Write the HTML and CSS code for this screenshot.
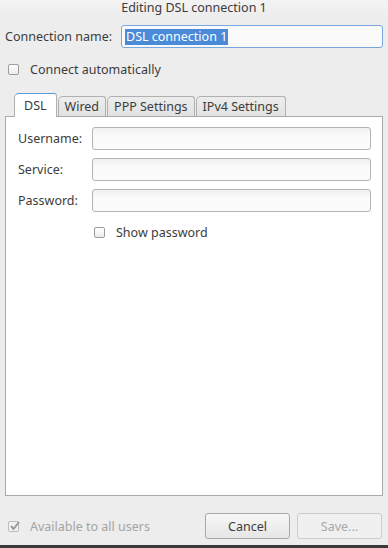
FILE: index.html
```html
<!DOCTYPE html>
<html lang="en">
<head>
    <meta charset="UTF-8">
    <title>Editing DSL connection 1</title>
    <link rel="stylesheet" href="styles.css">
</head>
<body>
    <div class="dialog">
        <div class="titlebar">Editing DSL connection 1</div>

        <div class="name-row">
            <label class="name-label">Connection name:</label>
            <div class="entry focused"><span class="selected">DSL connection 1</span></div>
        </div>

        <div class="check-row auto">
            <span class="check"></span>
            <span>Connect automatically</span>
        </div>

        <div class="tabs">
            <div class="tab active">DSL</div>
            <div class="tab">Wired</div>
            <div class="tab">PPP Settings</div>
            <div class="tab">IPv4 Settings</div>
        </div>

        <div class="panel">
            <div class="form">
                <label>Username:</label>
                <div class="entry"></div>
                <label>Service:</label>
                <div class="entry"></div>
                <label>Password:</label>
                <div class="entry"></div>
                <span></span>
                <div class="check-row">
                    <span class="check"></span>
                    <span>Show password</span>
                </div>
            </div>
        </div>

        <div class="footer">
            <div class="check-row disabled">
                <span class="check checked">
                    <svg width="11" height="10" viewBox="0 0 11 10"><path d="M2 5 L4.5 8 L10 1" fill="none" stroke="#9a9a9a" stroke-width="2"/></svg>
                </span>
                <span>Available to all users</span>
            </div>
            <div class="buttons">
                <button class="btn">Cancel</button>
                <button class="btn" disabled>Save...</button>
            </div>
        </div>
        <div class="frame-edge"></div>
    </div>
</body>
</html>
```

FILE: styles.css
```css
body {
    margin: 0;
    background: #ededed;
    font-family: "Noto Sans", "DejaVu Sans", sans-serif;
    font-size: 12.5px;
    color: #3c3c3c;
}
.dialog {
    height: 548px;
    display: flex;
    flex-direction: column;
    background: #ededed;
}
.titlebar {
    height: 17px;
    line-height: 15px;
    text-align: center;
    color: #3c3c3c;
    background: linear-gradient(#f4f4f4, #ececec);
}
.name-row {
    display: flex;
    align-items: center;
    margin-top: 8px;
    padding: 0 5px;
}
.name-label {
    width: 116px;
}
.entry {
    flex: 1;
    height: 21px;
    border: 1px solid #b4b4b4;
    border-radius: 3px;
    background: linear-gradient(#f0f0f0, #fbfbfb 40%, #fbfbfb);
    display: flex;
    align-items: center;
    padding: 0 3px;
}
.entry.focused {
    border-color: #7aa6df;
    background: #fafafa;
}
.selected {
    background: #4a8ad8;
    color: #fff;
    line-height: 16px;
    padding: 0 1px;
}
.check-row {
    display: flex;
    align-items: center;
    gap: 11px;
}
.check-row.auto {
    margin: 13px 0 0 8px;
}
.check {
    width: 9px;
    height: 9px;
    border: 1px solid #9c9c9c;
    border-radius: 2px;
    background: linear-gradient(#fff, #ececec);
    position: relative;
}
.check svg {
    position: absolute;
    left: 0;
    top: -1px;
}
.tabs {
    display: flex;
    align-items: flex-end;
    margin: 14px 0 0 14px;
    height: 24px;
}
.tab {
    height: 19px;
    line-height: 19px;
    padding: 0 6px 0 6px;
    border: 1px solid #b0b0b0;
    border-bottom: none;
    border-radius: 5px 3px 0 0;
    background: linear-gradient(#ededed, #e2e2e2);
    margin-right: 1px;
}
.tab.active {
    height: 23px;
    line-height: 24px;
    padding: 0 9px;
    background: #fff;
    border-color: #b0b0b0;
    border-top: 1px solid #5a9ad8;
    position: relative;
    top: 1px;
}
.panel {
    margin: 0 5px;
    height: 378px;
    background: #fff;
    border: 1px solid #a9a9a9;
}
.form {
    display: grid;
    grid-template-columns: 74px 279px;
    row-gap: 8px;
    align-items: center;
    padding: 10px 0 0 12px;
}
.form .check-row {
    margin: 4px 0 0 2px;
}
.footer {
    display: flex;
    justify-content: space-between;
    align-items: center;
    margin-top: 17px;
    padding: 0 6px 0 8px;
}
.disabled {
    color: #a4a4a4;
}
.disabled .check {
    border-color: #bcbcbc;
    background: #f2f2f2;
}
.buttons {
    display: flex;
    gap: 7px;
}
.btn {
    width: 85px;
    height: 26px;
    font-family: inherit;
    font-size: 12.5px;
    color: #3c3c3c;
    border: 1px solid #a9a9a9;
    border-radius: 3px;
    background: linear-gradient(#f7f7f7, #e6e6e6);
}
.btn:disabled {
    color: #a8a8a8;
    border-color: #cdcdcd;
    background: #f0f0f0;
}
.frame-edge {
    margin-top: auto;
    height: 3px;
    background: #3a3a3a;
}
```
